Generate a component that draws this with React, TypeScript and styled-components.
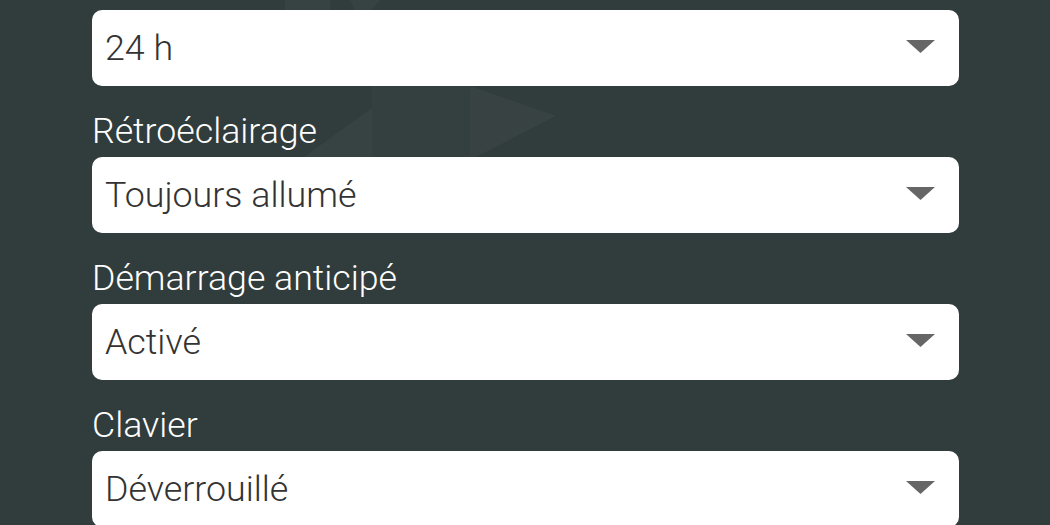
import React from "react";
import styled, { createGlobalStyle } from "styled-components";

const Global = createGlobalStyle`
  html, body { margin: 0; padding: 0; background: #313c3c; }
  body { font-family: Roboto, "Noto Sans", sans-serif; }
`;

const Page = styled.div`
  position: relative;
  width: 1050px;
  height: 525px;
  overflow: hidden;
  background: #313c3c;
`;

const Watermark = styled.svg`
  position: absolute;
  left: 0;
  top: 0;
  pointer-events: none;
`;

const Form = styled.div`
  position: relative;
  display: flex;
  flex-direction: column;
  padding: 10px 91px 0 92px;
`;

const Field = styled.div`
  display: flex;
  flex-direction: column;
`;

const Label = styled.div`
  height: 71px;
  display: flex;
  align-items: flex-end;
  box-sizing: border-box;
  padding-bottom: 5px;
  color: #ffffff;
  font-size: 35.7px;
  font-weight: 300;
  line-height: 42px;
`;

const Select = styled.div`
  height: 76px;
  box-sizing: border-box;
  background: #ffffff;
  border-radius: 10px;
  display: flex;
  align-items: center;
  justify-content: space-between;
  padding: 0 24px 0 13px;
  color: #333333;
  font-size: 35.8px;
  font-weight: 300;
`;

const Value = styled.span`
  line-height: 42px;
  padding-bottom: 1px;
`;

const Arrow = styled.svg`
  width: 29px;
  height: 14px;
  flex: none;
  margin-top: -2px;
`;

const fields: { label?: string; value: string }[] = [
  { value: "24 h" },
  { label: "Rétroéclairage", value: "Toujours allumé" },
  { label: "Démarrage anticipé", value: "Activé" },
  { label: "Clavier", value: "Déverrouillé" },
];

export default function App() {
  return (
    <Page>
      <Global />
      <Watermark width="1050" height="525" viewBox="0 0 1050 525">
        <g fill="#ffffff">
          <polygon points="470,86 556,116 470,160" opacity="0.035" />
          <polygon points="372,86 470,86 470,160 372,160" opacity="0.015" />
          <polygon points="300,160 372,108 372,160" opacity="0.03" />
          <polygon points="285,0 330,0 330,10 285,10" opacity="0.03" />
          <polygon points="350,0 380,0 372,10 355,10" opacity="0.03" />
        </g>
      </Watermark>
      <Form>
        {fields.map((f, i) => (
          <Field key={i}>
            {f.label && <Label>{f.label}</Label>}
            <Select>
              <Value>{f.value}</Value>
              <Arrow viewBox="0 0 29 14">
                <polygon points="0,0 29,0 14.5,13" fill="#666666" />
              </Arrow>
            </Select>
          </Field>
        ))}
      </Form>
    </Page>
  );
}
